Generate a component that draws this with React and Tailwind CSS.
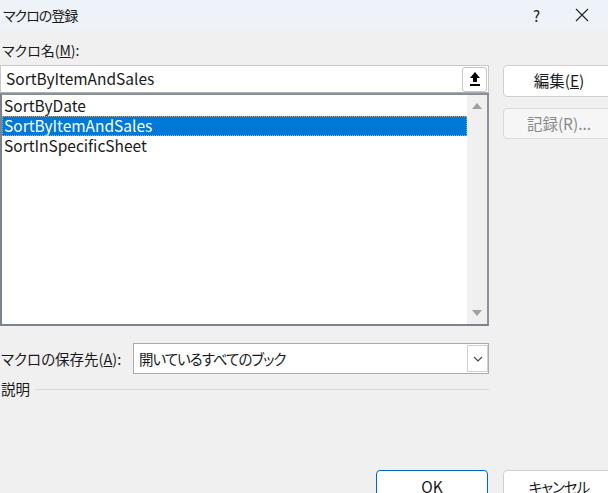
import React, { useState } from "react";

const font = { fontFamily: '"Noto Sans CJK JP", "Noto Sans", sans-serif' };

const macros = ["SortByDate", "SortByItemAndSales", "SortInSpecificSheet"];

const App = () => {
  const [selected, setSelected] = useState(1);

  return (
    <div
      className="w-[608px] h-[493px] overflow-hidden bg-[#f0f0f0] text-[#1a1a1a] relative [font-feature-settings:'palt']"
      style={font}
    >
      {/* title bar */}
      <div className="h-[30px] bg-[#eef3f9] flex items-center pl-[3px]">
        <span className="text-[14px] leading-none tracking-[-1px]">マクロの登録</span>
        <span className="ml-auto text-[15px] leading-none mr-[35px]">?</span>
        <svg width="14" height="14" viewBox="0 0 14 14" className="mr-[19px]">
          <path d="M1 1L13 13M13 1L1 13" stroke="#222" strokeWidth="1.1" fill="none" />
        </svg>
      </div>

      <div className="flex gap-[14px] pt-[12px]">
        {/* left column */}
        <div className="w-[489px] shrink-0 flex flex-col">
          <div className="h-[23px] pl-[2px] text-[14px] leading-[16px]">
            マクロ名(<span className="underline">M</span>):
          </div>
          <div className="h-[28px] bg-white border border-[#c8c8c8] border-b-[#b0b0b0] flex items-center pl-[5px]">
            <span className="text-[15.5px]">{macros[selected]}</span>
            <div className="ml-auto mr-[1px] w-[25px] h-[25px] border border-[#c6c6c6] rounded-[3px] bg-white flex items-center justify-center">
              <svg width="12" height="16" viewBox="0 0 12 16">
                <path d="M6 1L11 7H8V11H4V7H1Z" fill="#000" />
                <rect x="1" y="13" width="10" height="2" fill="#000" />
              </svg>
            </div>
          </div>
          <div className="h-[233px] bg-white border-2 border-[#7c838d] border-r-[#8a9099] border-t-[#8a9099] flex">
            <div className="flex-1 pt-[1px]">
              {macros.map((m, i) => (
                <div
                  key={m}
                  onClick={() => setSelected(i)}
                  className={
                    i === selected
                      ? "h-[20px] flex items-center pl-[2px] text-[15.5px] bg-[#0078d7] text-white outline-1 outline-dotted outline-[#f0a040] -outline-offset-1"
                      : "h-[20px] flex items-center pl-[2px] text-[15.5px]"
                  }
                >
                  {m}
                </div>
              ))}
            </div>
            <div className="w-[20px] bg-[#f0f0f0] flex flex-col items-center justify-between py-[8px]">
              <svg width="10" height="6" viewBox="0 0 10 6">
                <path d="M0 6L5 0L10 6Z" fill="#a0a0a0" />
              </svg>
              <svg width="10" height="6" viewBox="0 0 10 6">
                <path d="M0 0L10 0L5 6Z" fill="#a0a0a0" />
              </svg>
            </div>
          </div>

          <div className="flex items-center mt-[17px]">
            <span className="w-[133px] pl-[1px] text-[14.5px]">
              マクロの保存先(<span className="underline">A</span>):
            </span>
            <div className="flex-1 h-[31px] bg-white border border-[#ababab] flex items-center pl-[5px]">
              <span className="text-[14.5px] tracking-[-1px]">開いているすべてのブック</span>
              <div className="ml-auto mr-[0px] w-[21px] h-[27px] border border-[#d0d0d0] bg-white flex items-center justify-center">
                <svg width="10" height="6" viewBox="0 0 10 6">
                  <path d="M1 1L5 5L9 1" stroke="#444" strokeWidth="1.1" fill="none" />
                </svg>
              </div>
            </div>
          </div>

          <div className="flex items-center mt-[6px] h-[18px]">
            <span className="text-[14.5px] pl-[1px]">説明</span>
            <div className="flex-1 ml-[5px] h-px bg-[#d9d9d9]" />
          </div>
        </div>

        {/* right column */}
        <div className="shrink-0 flex flex-col gap-[11px] pt-[23px]">
          <button className="w-[112px] h-[32px] bg-white border border-[#d0d0d0] rounded-[4px] text-[15.5px] text-[#1a1a1a]">
            編集(<span className="underline">E</span>)
          </button>
          <button className="w-[112px] h-[31px] bg-[#f6f6f6] border border-[#dadada] rounded-[4px] text-[15.5px] text-[#8a8a8a]">
            記録(R)...
          </button>
        </div>
      </div>

      {/* bottom buttons */}
      <div className="flex gap-[15px] pl-[376px] mt-[72px]">
        <button className="shrink-0 w-[112px] h-[32px] bg-white border border-[#0067c0] rounded-[4px] text-[15.5px] pt-[4px] flex justify-center">
          OK
        </button>
        <button className="shrink-0 w-[112px] h-[32px] bg-white border border-[#d0d0d0] rounded-[4px] text-[14.5px] tracking-[-1px] pt-[5px] flex justify-center">
          キャンセル
        </button>
      </div>
    </div>
  );
};

export default App;
